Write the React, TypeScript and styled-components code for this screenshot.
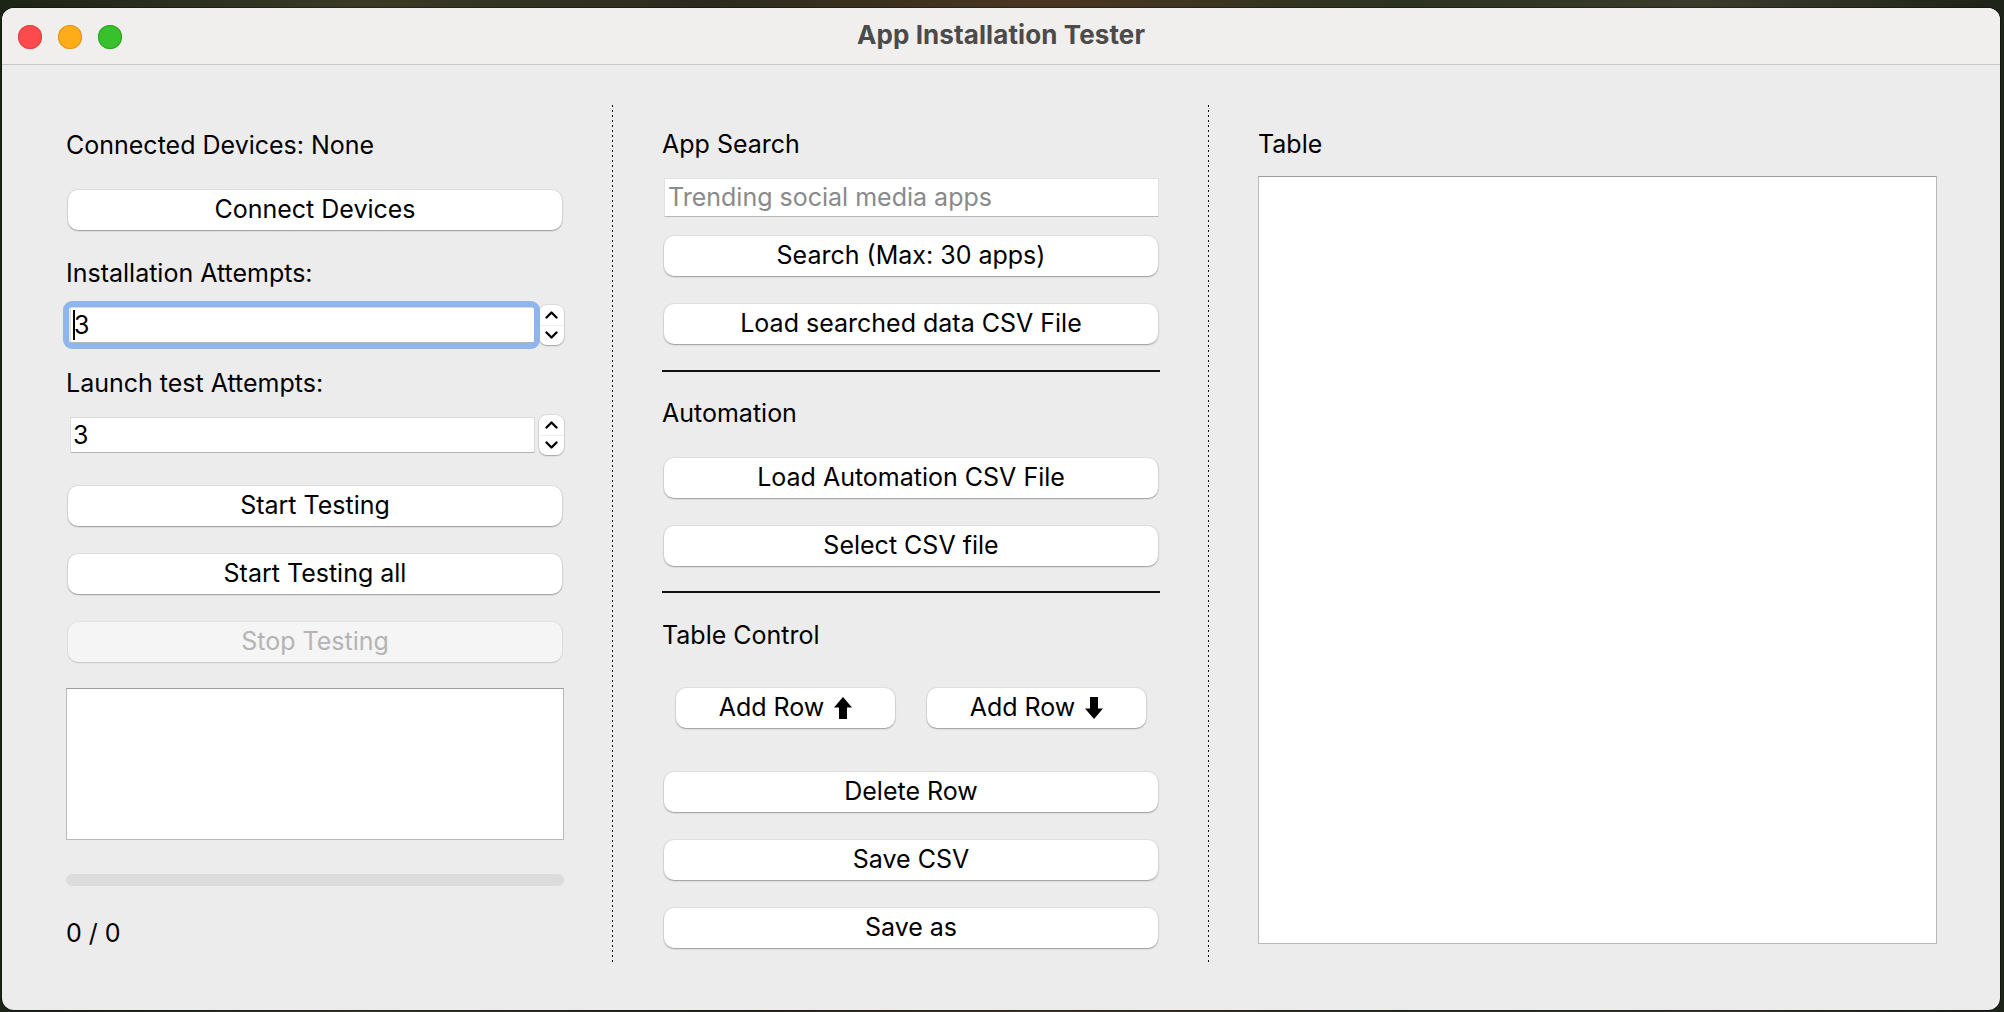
import React from "react";
import styled, { createGlobalStyle } from "styled-components";

const FONT = `Inter, "Liberation Sans", "DejaVu Sans", sans-serif`;

const GlobalStyle = createGlobalStyle`
  html, body { margin: 0; padding: 0; }
  body {
    width: 2004px;
    height: 1012px;
    overflow: hidden;
    font-family: ${FONT};
    -webkit-font-smoothing: antialiased;
  }
  * { box-sizing: border-box; }
`;

const Desktop = styled.div`
  width: 2004px;
  height: 1012px;
  padding: 8px 4px 2px 2px;
  background: linear-gradient(
    90deg,
    #1c2416 0%,
    #3a3a26 18%,
    #2b2a1c 35%,
    #4a3522 52%,
    #2a3320 70%,
    #3b3b2a 85%,
    #1d2318 100%
  );
  display: flex;
`;

const Window = styled.div`
  width: 1998px;
  height: 1002px;
  border-radius: 12px;
  overflow: hidden;
  background: #ececec;
  display: flex;
  flex-direction: column;
  box-shadow: 0 0 0 1px rgba(0, 0, 0, 0.35);
`;

const TitleBar = styled.div`
  flex: none;
  height: 57px;
  background: #f0efed;
  border-bottom: 1px solid #c8c8c8;
  display: grid;
  grid-template-columns: 1fr auto 1fr;
  align-items: center;
`;

const Lights = styled.div`
  display: flex;
  gap: 16px;
  padding-left: 16px;
  padding-top: 1px;
`;

const Light = styled.span<{ $fill: string; $edge: string }>`
  width: 24px;
  height: 24px;
  border-radius: 50%;
  background: ${(p) => p.$fill};
  box-shadow: inset 0 0 0 1px ${(p) => p.$edge};
`;

const Title = styled.div`
  font-size: 26px;
  font-weight: 700;
  color: #4b4b4b;
  letter-spacing: 0.1px;
  line-height: 32px;
  margin-top: -3px;
`;

const Body = styled.div`
  flex: 1;
  display: flex;
  align-items: flex-start;
  padding: 40px 63px 0 64px;
`;

const Column = styled.div<{ $width: number }>`
  width: ${(p) => p.$width}px;
  flex: none;
  display: flex;
  flex-direction: column;
`;

const Divider = styled.div<{ $before: number; $after: number }>`
  flex: none;
  width: 1px;
  height: 858px;
  margin-left: ${(p) => p.$before}px;
  margin-right: ${(p) => p.$after}px;
  background: repeating-linear-gradient(
    to bottom,
    #111 0px,
    #111 2px,
    transparent 2px,
    transparent 5px
  );
`;

const Label = styled.div<{ $mt: number }>`
  margin-top: ${(p) => p.$mt}px;
  height: 32px;
  font-size: 25px;
  line-height: 32px;
  color: #000;
  white-space: nowrap;
`;

const PushButton = styled.button<{ $mt?: number }>`
  margin: ${(p) => p.$mt ?? 0}px 2px 0 2px;
  height: 40px;
  padding: 0 0 3px 0;
  border: none;
  border-radius: 10px;
  background: #ffffff;
  box-shadow: 0 0 0 1px rgba(0, 0, 0, 0.05), 0 1px 1.5px rgba(0, 0, 0, 0.3);
  font-family: ${FONT};
  font-size: 25px;
  color: #000;
  display: flex;
  align-items: center;
  justify-content: center;
  gap: 10px;
  cursor: default;

  &:disabled {
    background: #f5f5f5;
    color: #b4b4b4;
    box-shadow: 0 0 0 1px rgba(0, 0, 0, 0.04), 0 1px 1.5px rgba(0, 0, 0, 0.12);
  }
`;

const RowButton = styled(PushButton)`
  flex: 1;
  margin: 0;
`;

const ButtonRow = styled.div<{ $mt: number }>`
  margin-top: ${(p) => p.$mt}px;
  display: flex;
  gap: 32px;
  padding: 0 14px;
`;

const SpinRow = styled.div<{ $mt: number }>`
  margin-top: ${(p) => p.$mt}px;
  height: 40px;
  display: flex;
  align-items: center;
  gap: 4px;
  padding-left: 4px;
`;

const SpinField = styled.div<{ $focused?: boolean }>`
  position: relative;
  flex: 1;
  height: 36px;
  background: #fff;
  border: 1px solid #dadada;
  border-bottom-color: #b5b5b5;
  display: flex;
  align-items: center;
  padding-left: 2px;
  padding-bottom: 1px;
  font-size: 25px;
  color: #000;

  &::after {
    content: "";
    display: ${(p) => (p.$focused ? "block" : "none")};
    position: absolute;
    inset: -7px -6px -7px -8px;
    border: 6px solid #8fb6ec;
    border-radius: 9px;
    pointer-events: none;
  }
`;

const Caret = styled.span`
  width: 2px;
  height: 30px;
  background: #000;
  margin-right: -1px;
`;

const Stepper = styled.div`
  width: 25px;
  height: 40px;
  flex: none;
  border-radius: 8px;
  background: #fff;
  box-shadow: 0 0 0 1px rgba(0, 0, 0, 0.07), 0 1px 1.5px rgba(0, 0, 0, 0.25);
  display: flex;
  flex-direction: column;
`;

const StepHalf = styled.div<{ $top?: boolean }>`
  flex: 1;
  display: flex;
  align-items: center;
  justify-content: center;
  border-bottom: ${(p) => (p.$top ? "1px solid #eeeeee" : "none")};
`;

const TextBox = styled.div<{ $mt: number; $height: number }>`
  margin-top: ${(p) => p.$mt}px;
  height: ${(p) => p.$height}px;
  background: #fff;
  border: 1px solid #b9b9b9;
  border-top-color: #9c9c9c;
`;

const Progress = styled.div<{ $mt: number }>`
  margin-top: ${(p) => p.$mt}px;
  height: 12px;
  border-radius: 6px;
  background: #dcdcdc;
`;

const SearchField = styled.div<{ $mt: number }>`
  margin: ${(p) => p.$mt}px 1px 0 2px;
  height: 39px;
  background: #fff;
  border: 1px solid #e2e2e2;
  border-bottom-color: #b8b8b8;
  display: flex;
  align-items: center;
  padding-left: 3px;
  padding-bottom: 1px;
  font-size: 25px;
  color: #8a8a8a;
  white-space: nowrap;
`;

const Separator = styled.div<{ $mt: number }>`
  margin-top: ${(p) => p.$mt}px;
  height: 2px;
  background: #111;
`;

const ArrowSvg = styled.svg`
  display: block;
  flex: none;
  margin-top: 2px;
`;

const ArrowIcon = ({ down }: { down?: boolean }) => (
  <ArrowSvg width="18" height="22" viewBox="0 0 18 22">
    <path
      d={
        down
          ? "M9 22 L18 11.5 L13 11.5 L13 0 L5 0 L5 11.5 L0 11.5 Z"
          : "M9 0 L18 10.5 L13 10.5 L13 22 L5 22 L5 10.5 L0 10.5 Z"
      }
      fill="#000"
    />
  </ArrowSvg>
);

const Chevron = ({ down }: { down?: boolean }) => (
  <svg width="13" height="9" viewBox="0 0 13 9">
    <polyline
      points={down ? "1.5,1.5 6.5,6.5 11.5,1.5" : "1.5,7.5 6.5,2.5 11.5,7.5"}
      fill="none"
      stroke="#000"
      strokeWidth="2.3"
      strokeLinecap="round"
      strokeLinejoin="round"
    />
  </svg>
);

const SpinBox = ({ mt, focused }: { mt: number; focused?: boolean }) => (
  <SpinRow $mt={mt}>
    <SpinField $focused={focused}>
      {focused && <Caret />}3
    </SpinField>
    <Stepper>
      <StepHalf $top>
        <Chevron />
      </StepHalf>
      <StepHalf>
        <Chevron down />
      </StepHalf>
    </Stepper>
  </SpinRow>
);

export default function App() {
  return (
    <>
      <GlobalStyle />
      <Desktop>
        <Window>
          <TitleBar>
            <Lights>
              <Light $fill="#fd4a4c" $edge="#e2403f" />
              <Light $fill="#fead19" $edge="#df9514" />
              <Light $fill="#38c12c" $edge="#2ca522" />
            </Lights>
            <Title>App Installation Tester</Title>
            <div />
          </TitleBar>
          <Body>
            <Column $width={498}>
              <Label $mt={24}>Connected Devices: None</Label>
              <PushButton $mt={29}>Connect Devices</PushButton>
              <Label $mt={27}>Installation Attempts:</Label>
              <SpinBox mt={16} focused />
              <Label $mt={22}>Launch test Attempts:</Label>
              <SpinBox mt={16} />
              <PushButton $mt={31}>Start Testing</PushButton>
              <PushButton $mt={28}>Start Testing all</PushButton>
              <PushButton $mt={28} disabled>
                Stop Testing
              </PushButton>
              <TextBox $mt={26} $height={152} />
              <Progress $mt={34} />
              <Label $mt={31}>0 / 0</Label>
            </Column>

            <Divider $before={48} $after={49} />

            <Column $width={498}>
              <Label $mt={23}>App Search</Label>
              <SearchField $mt={18}>Trending social media apps</SearchField>
              <PushButton $mt={19}>Search (Max: 30 apps)</PushButton>
              <PushButton $mt={28}>Load searched data CSV File</PushButton>
              <Separator $mt={26} />
              <Label $mt={25}>Automation</Label>
              <PushButton $mt={29}>Load Automation CSV File</PushButton>
              <PushButton $mt={28}>Select CSV file</PushButton>
              <Separator $mt={25} />
              <Label $mt={26}>Table Control</Label>
              <ButtonRow $mt={37}>
                <RowButton>
                  Add Row <ArrowIcon />
                </RowButton>
                <RowButton>
                  Add Row <ArrowIcon down />
                </RowButton>
              </ButtonRow>
              <PushButton $mt={44}>Delete Row</PushButton>
              <PushButton $mt={28}>Save CSV</PushButton>
              <PushButton $mt={28}>Save as</PushButton>
            </Column>

            <Divider $before={48} $after={49} />

            <Column $width={679}>
              <Label $mt={23}>Table</Label>
              <TextBox $mt={16} $height={768} />
            </Column>
          </Body>
        </Window>
      </Desktop>
    </>
  );
}
